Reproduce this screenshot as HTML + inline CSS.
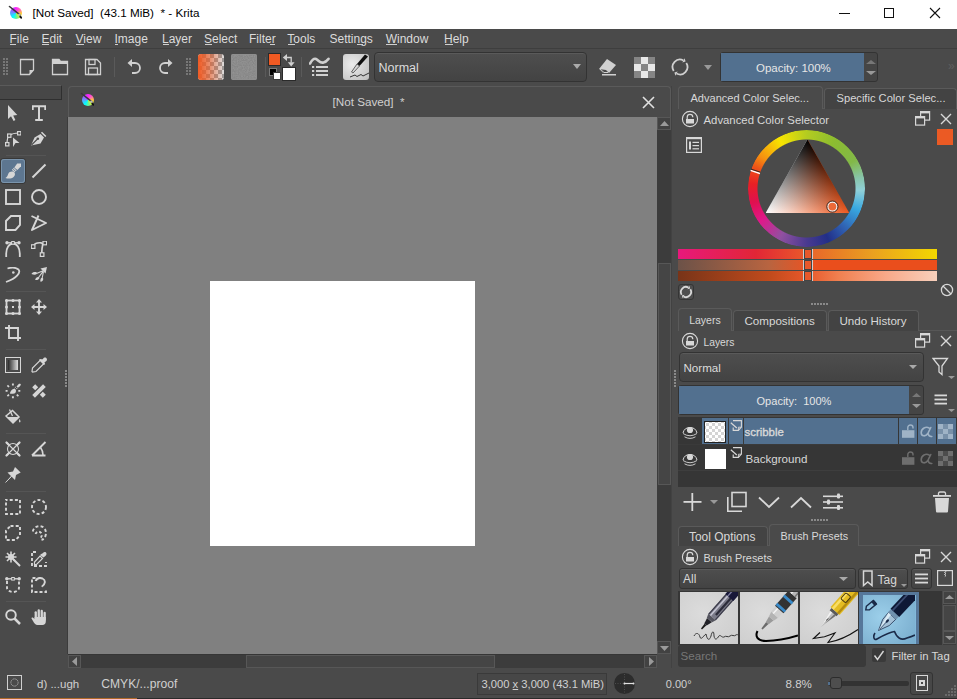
<!DOCTYPE html>
<html><head><meta charset="utf-8"><style>
html,body{margin:0;padding:0;}
body{width:957px;height:699px;overflow:hidden;position:relative;background:#4a4a4a;font-family:"Liberation Sans",sans-serif;}
body>div,body>span{position:absolute;}
.t{position:absolute;white-space:pre;line-height:1;}
</style></head><body>
<svg width="0" height="0" style="position:absolute"><defs>
<linearGradient id="cw" x1="0" y1="0" x2="1" y2="1"><stop offset="0" stop-color="#f0f"/><stop offset="0.5" stop-color="#8ae"/><stop offset="1" stop-color="#0ff"/></linearGradient>
</defs></svg>
<div style="left:0px;top:0px;width:957px;height:29px;background:#fff"></div><div style="left:9.600000000000001px;top:6.8px;width:12.6px;height:12.6px;border-radius:50%;background:conic-gradient(#ff20ff 0deg,#ff60c0 45deg,#ffc040 90deg,#f0f020 120deg,#80f080 165deg,#00ffff 215deg,#60a0ff 270deg,#b040ff 320deg,#ff20ff 360deg)"></div><svg style="position:absolute;left:6.600000000000001px;top:3.8px;" width="18.6" height="18.6" viewBox="0 0 18.6 18.6"><g transform="scale(1.0)"><path d="M2.5 2.5L13 11" stroke="#3a3a3a" stroke-width="1.6" stroke-linecap="round"/><path d="M11.5 10L13.5 11.5" stroke="#bbb" stroke-width="2"/><path d="M13 11.5C14 12 15.5 13 15 14.5C14 15 12.5 14 12.3 12.5Z" fill="#111"/></g></svg><span class="t" style="left:32.5px;top:7.00px;font-size:11.7px;color:#000;">[Not Saved]&nbsp; (43.1 MiB)&nbsp; * - Krita</span><div style="left:839px;top:13px;width:11px;height:1px;background:#111"></div><div style="left:884px;top:8px;width:10px;height:10px;border:1px solid #111;box-sizing:border-box"></div><svg style="position:absolute;left:929px;top:7px;" width="12" height="12" viewBox="0 0 12 12"><path d="M1 1L11 11M11 1L1 11" stroke="#111" stroke-width="1.1"/></svg><div style="left:0px;top:29px;width:957px;height:20px;background:#4a4a4a"></div><span class="t" style="left:9.5px;top:33.00px;font-size:12px;color:#dcdcdc;">File</span><span class="t" style="left:41.5px;top:33.00px;font-size:12px;color:#dcdcdc;">Edit</span><span class="t" style="left:75.5px;top:33.00px;font-size:12px;color:#dcdcdc;">View</span><span class="t" style="left:114.5px;top:33.00px;font-size:12px;color:#dcdcdc;">Image</span><span class="t" style="left:162.0px;top:33.00px;font-size:12px;color:#dcdcdc;">Layer</span><span class="t" style="left:204.0px;top:33.00px;font-size:12px;color:#dcdcdc;">Select</span><span class="t" style="left:249.0px;top:33.00px;font-size:12px;color:#dcdcdc;">Filter</span><span class="t" style="left:287.3px;top:33.00px;font-size:12px;color:#dcdcdc;">Tools</span><span class="t" style="left:329.5px;top:33.00px;font-size:12px;color:#dcdcdc;">Settings</span><span class="t" style="left:385.7px;top:33.00px;font-size:12px;color:#dcdcdc;">Window</span><span class="t" style="left:444.0px;top:33.00px;font-size:12px;color:#dcdcdc;">Help</span><div style="left:10px;top:44px;width:6px;height:1px;background:#cfcfcf"></div><div style="left:42px;top:44px;width:7px;height:1px;background:#cfcfcf"></div><div style="left:76px;top:44px;width:8px;height:1px;background:#cfcfcf"></div><div style="left:115px;top:44px;width:3px;height:1px;background:#cfcfcf"></div><div style="left:162.5px;top:44px;width:6px;height:1px;background:#cfcfcf"></div><div style="left:204.5px;top:44px;width:7px;height:1px;background:#cfcfcf"></div><div style="left:270px;top:44px;width:5px;height:1px;background:#cfcfcf"></div><div style="left:288px;top:44px;width:7px;height:1px;background:#cfcfcf"></div><div style="left:357px;top:44px;width:6px;height:1px;background:#cfcfcf"></div><div style="left:386.2px;top:44px;width:11px;height:1px;background:#cfcfcf"></div><div style="left:444.5px;top:44px;width:8px;height:1px;background:#cfcfcf"></div><div style="left:0px;top:48px;width:957px;height:1px;background:#3e3e3e"></div><div style="left:0px;top:49px;width:957px;height:36px;background:#4a4a4a"></div><svg style="position:absolute;left:3px;top:58px;" width="6" height="18" viewBox="0 0 6 18"><rect x="0" y="0" width="2" height="2" fill="#777"/><rect x="3" y="0" width="2" height="2" fill="#777"/><rect x="0" y="3" width="2" height="2" fill="#777"/><rect x="3" y="3" width="2" height="2" fill="#777"/><rect x="0" y="6" width="2" height="2" fill="#777"/><rect x="3" y="6" width="2" height="2" fill="#777"/><rect x="0" y="9" width="2" height="2" fill="#777"/><rect x="3" y="9" width="2" height="2" fill="#777"/><rect x="0" y="12" width="2" height="2" fill="#777"/><rect x="3" y="12" width="2" height="2" fill="#777"/><rect x="0" y="15" width="2" height="2" fill="#777"/><rect x="3" y="15" width="2" height="2" fill="#777"/></svg><svg style="position:absolute;left:186px;top:58px;" width="6" height="18" viewBox="0 0 6 18"><rect x="0" y="0" width="2" height="2" fill="#777"/><rect x="3" y="0" width="2" height="2" fill="#777"/><rect x="0" y="3" width="2" height="2" fill="#777"/><rect x="3" y="3" width="2" height="2" fill="#777"/><rect x="0" y="6" width="2" height="2" fill="#777"/><rect x="3" y="6" width="2" height="2" fill="#777"/><rect x="0" y="9" width="2" height="2" fill="#777"/><rect x="3" y="9" width="2" height="2" fill="#777"/><rect x="0" y="12" width="2" height="2" fill="#777"/><rect x="3" y="12" width="2" height="2" fill="#777"/><rect x="0" y="15" width="2" height="2" fill="#777"/><rect x="3" y="15" width="2" height="2" fill="#777"/></svg><svg style="position:absolute;left:19px;top:58px;" width="16" height="18" viewBox="0 0 16 18"><path d="M1.5 1.5H14.5V12L10.5 16.5H1.5Z" fill="none" stroke="#d0d0d0" stroke-width="1.3"/><path d="M14.5 12L10.5 12L10.5 16.5Z" fill="#d0d0d0"/></svg><svg style="position:absolute;left:51px;top:58px;" width="18" height="18" viewBox="0 0 18 18"><path d="M1.5 1.5H8L9.5 3.5H16.5V16.5H1.5Z" fill="none" stroke="#d0d0d0" stroke-width="1.3"/><path d="M1.5 1.5H8L9.5 3.5H16.5V6H1.5Z" fill="#d0d0d0"/></svg><svg style="position:absolute;left:84px;top:58px;" width="18" height="18" viewBox="0 0 18 18"><path d="M1.5 1.5H13L16.5 5V16.5H1.5Z" fill="none" stroke="#d0d0d0" stroke-width="1.3"/><rect x="5" y="1.5" width="6" height="5" fill="none" stroke="#d0d0d0" stroke-width="1.3"/><rect x="4.5" y="10" width="9" height="6.5" fill="none" stroke="#d0d0d0" stroke-width="1.3"/></svg><div style="left:114px;top:57px;width:1px;height:20px;background:#5a5a5a"></div><svg style="position:absolute;left:125px;top:57px;" width="18" height="20" viewBox="0 0 18 20"><path d="M6 6H10A5 5 0 0 1 10 16H7" fill="none" stroke="#d0d0d0" stroke-width="1.8"/><path d="M2.5 6L7 2V10Z" fill="#d0d0d0"/></svg><svg style="position:absolute;left:157px;top:57px;" width="18" height="20" viewBox="0 0 18 20"><path d="M12 6H8A5 5 0 0 0 8 16H11" fill="none" stroke="#d0d0d0" stroke-width="1.8"/><path d="M15.5 6L11 2V10Z" fill="#d0d0d0"/></svg><div style="left:198px;top:54px;width:26px;height:26px;border-radius:3px;overflow:hidden;background-color:#ddd;background-image:linear-gradient(45deg,#999 25%,transparent 25%,transparent 75%,#999 75%),linear-gradient(45deg,#999 25%,transparent 25%,transparent 75%,#999 75%);background-size:8px 8px;background-position:0 0,4px 4px"><div style="position:absolute;left:0;top:0;width:26px;height:26px;background:linear-gradient(90deg,#f05a23 0%,rgba(240,90,35,0.55) 50%,rgba(240,90,35,0) 100%)"></div></div><svg style="position:absolute;left:231px;top:54px;" width="26" height="26" viewBox="0 0 26 26"><defs><filter id="nz" x="0" y="0" width="100%" height="100%"><feTurbulence type="fractalNoise" baseFrequency="1.2" numOctaves="1" seed="3"/><feColorMatrix type="matrix" values="0 0 0 0 0.53 0 0 0 0 0.53 0 0 0 0 0.53 1 0 0 0 -0.3"/></filter></defs><rect width="26" height="26" rx="2" fill="#868686"/><rect width="26" height="26" rx="2" fill="#000" filter="url(#nz)" opacity="0.5"/><rect x="0.5" y="0.5" width="25" height="25" rx="2" fill="none" stroke="#8e8e8e" stroke-width="1"/></svg><div style="left:265px;top:57px;width:1px;height:20px;background:#5a5a5a"></div><div style="left:268px;top:53px;width:13px;height:13px;background:#f05a23;border:1px solid #2a2a2a;box-sizing:border-box"></div><div style="left:282px;top:67px;width:14px;height:14px;background:#fff;border:1px solid #2a2a2a;box-sizing:border-box"></div><div style="left:269px;top:68px;width:8px;height:8px;background:#000;border:1px solid #7a7a7a;box-sizing:border-box"></div><div style="left:273px;top:72px;width:8px;height:8px;background:#fff;border:1px solid #3a3a3a;box-sizing:border-box"></div><svg style="position:absolute;left:282px;top:53px;" width="15" height="15" viewBox="0 0 15 15"><path d="M4 4.5H9.2V9.5" fill="none" stroke="#d0d0d0" stroke-width="1.3"/><path d="M0.8 4.5L5 1V8Z M9.2 13.5L5.8 9.3H12.6Z" fill="#d0d0d0"/></svg><div style="left:301px;top:57px;width:1px;height:20px;background:#5a5a5a"></div><svg style="position:absolute;left:309px;top:55px;" width="22" height="23" viewBox="0 0 22 23"><path d="M1 8.5C3 5 4.5 3 7 4C9.5 5 11 8.5 14.5 7.5C17 7 18.5 5 19.5 3.8" fill="none" stroke="#d0d0d0" stroke-width="2.6" stroke-linecap="round"/><rect x="3" y="11" width="2.2" height="2" fill="#d0d0d0"/><rect x="7" y="11" width="12" height="2" fill="#d0d0d0"/><rect x="3" y="15" width="2.2" height="2" fill="#d0d0d0"/><rect x="7" y="15" width="12" height="2" fill="#d0d0d0"/><rect x="3" y="19" width="2.2" height="2" fill="#d0d0d0"/><rect x="7" y="19" width="12" height="2" fill="#d0d0d0"/></svg><div style="left:343px;top:54px;width:26px;height:26px;border-radius:3px;background:radial-gradient(circle at 35% 40%,#ececec,#bdbdbd)"></div><svg style="position:absolute;left:343px;top:54px;" width="26" height="26" viewBox="0 0 26 26"><path d="M25 2.5L22 0.5L14 10L16.5 12Z" fill="#111"/><path d="M14 10L16.5 12L10 19L8.5 18Z" fill="#d8d8d8" stroke="#444" stroke-width="0.8"/><path d="M7 23L12 21L14 22.5L18 20.5L20 22L26 19" fill="none" stroke="#333" stroke-width="1"/></svg><div style="left:374px;top:52px;width:213px;height:30px;border:1px solid #333;border-radius:4px;box-sizing:border-box;background:linear-gradient(#4e4e4e,#434343);box-shadow:inset 0 1px 0 #5a5a5a"></div><span class="t" style="left:378.5px;top:62.00px;font-size:12.5px;color:#dcdcdc;">Normal</span><svg style="position:absolute;left:573px;top:64px;" width="8" height="5" viewBox="0 0 8 5"><path d="M0 0H8L4 5Z" fill="#aaa"/></svg><svg style="position:absolute;left:597px;top:57px;" width="21" height="20" viewBox="0 0 21 20"><path d="M10 2L19 8L12 16H6L2 12Z" fill="#d0d0d0"/><path d="M2 12L6 16H12L9 13" fill="#4a4a4a"/><path d="M3 12L7 15.5H11" fill="none" stroke="#d0d0d0" stroke-width="1"/><rect x="5" y="17" width="14" height="1.5" fill="#d0d0d0"/></svg><svg style="position:absolute;left:634px;top:57px;" width="21" height="21" viewBox="0 0 21 21"><rect x="0" y="0" width="7" height="7" fill="#858585"/><rect x="7" y="0" width="7" height="7" fill="#e8e8e8"/><rect x="14" y="0" width="7" height="7" fill="#858585"/><rect x="0" y="7" width="7" height="7" fill="#e8e8e8"/><rect x="7" y="7" width="7" height="7" fill="#858585"/><rect x="14" y="7" width="7" height="7" fill="#e8e8e8"/><rect x="0" y="14" width="7" height="7" fill="#858585"/><rect x="7" y="14" width="7" height="7" fill="#e8e8e8"/><rect x="14" y="14" width="7" height="7" fill="#858585"/></svg><svg style="position:absolute;left:670px;top:57px;" width="20" height="20" viewBox="0 0 20 20"><path d="M13.47 3.47A7.4 7.4 0 0 0 3.72 13.92" fill="none" stroke="#d0d0d0" stroke-width="1.8"/><path d="M15.59 4.59L14.60 1.35L12.35 5.59Z" fill="#d0d0d0"/><path d="M6.53 16.53A7.4 7.4 0 0 0 16.28 6.08" fill="none" stroke="#d0d0d0" stroke-width="1.8"/><path d="M4.41 15.41L5.40 18.65L7.65 14.41Z" fill="#d0d0d0"/></svg><svg style="position:absolute;left:704px;top:65px;" width="8" height="5" viewBox="0 0 8 5"><path d="M0 0H8L4 5Z" fill="#999"/></svg><div style="left:720px;top:52px;width:158px;height:30px;border:1px solid #333;border-radius:3px;box-sizing:border-box;background:#454545"></div><div style="left:721px;top:53px;width:143px;height:28px;background:#52708f"></div><span class="t" style="left:756px;top:63.00px;font-size:11.5px;color:#e6e6e6;">Opacity: 100%</span><svg style="position:absolute;left:866px;top:60px;" width="10" height="4" viewBox="0 0 10 4"><path d="M0 4H10L5 0Z" fill="#777"/></svg><svg style="position:absolute;left:866px;top:71px;" width="10" height="4" viewBox="0 0 10 4"><path d="M0 0H10L5 4Z" fill="#999"/></svg><span class="t" style="left:948px;top:60.00px;font-size:12px;color:#5e5e5e;">&raquo;</span><div style="left:0px;top:85px;width:62px;height:15px;border:1px solid #2f2f2f;border-top-color:#5a5a5a;border-left:none;box-sizing:border-box;background:#474747"></div><div style="left:62px;top:86px;width:5px;height:582px;background:#4a4a4a"></div><div style="left:65px;top:370px;width:2px;height:2px;background:#8a8a8a"></div><div style="left:65px;top:373px;width:2px;height:2px;background:#8a8a8a"></div><div style="left:65px;top:376px;width:2px;height:2px;background:#8a8a8a"></div><div style="left:65px;top:379px;width:2px;height:2px;background:#8a8a8a"></div><div style="left:65px;top:382px;width:2px;height:2px;background:#8a8a8a"></div><div style="left:65px;top:385px;width:2px;height:2px;background:#8a8a8a"></div><div style="left:67px;top:117px;width:1px;height:537px;background:#3c3c3c"></div><div style="left:68px;top:86px;width:603px;height:31px;background:#4a4a4a;border:1px solid #5a5a5a;border-bottom:none;border-radius:4px 4px 0 0;box-sizing:border-box"></div><div style="left:81.7px;top:93.7px;width:12.6px;height:12.6px;border-radius:50%;background:conic-gradient(#ff20ff 0deg,#ff60c0 45deg,#ffc040 90deg,#f0f020 120deg,#80f080 165deg,#00ffff 215deg,#60a0ff 270deg,#b040ff 320deg,#ff20ff 360deg)"></div><svg style="position:absolute;left:78.7px;top:90.7px;" width="18.6" height="18.6" viewBox="0 0 18.6 18.6"><g transform="scale(1.0)"><path d="M2.5 2.5L13 11" stroke="#3a3a3a" stroke-width="1.6" stroke-linecap="round"/><path d="M11.5 10L13.5 11.5" stroke="#bbb" stroke-width="2"/><path d="M13 11.5C14 12 15.5 13 15 14.5C14 15 12.5 14 12.3 12.5Z" fill="#111"/></g></svg><span class="t" style="left:332.5px;top:96.00px;font-size:11.7px;color:#cfcfcf;">[Not Saved]&nbsp; *</span><svg style="position:absolute;left:642px;top:96px;" width="13" height="13" viewBox="0 0 13 13"><path d="M1 1L12 12M12 1L1 12" stroke="#e0e0e0" stroke-width="1.6"/></svg><div style="left:68px;top:117px;width:589px;height:537px;background:#808080"></div><div style="left:210px;top:281px;width:265px;height:265px;background:#fff"></div><div style="left:657px;top:117px;width:14px;height:537px;background:#3c3c3c"></div><div style="left:657px;top:117px;width:14px;height:13px;border:1px solid #575757;box-sizing:border-box;background:#424242"></div><svg style="position:absolute;left:660px;top:121px;" width="9" height="5" viewBox="0 0 9 5"><path d="M0 5H9L4.5 0Z" fill="#9a9a9a"/></svg><div style="left:658px;top:263px;width:13px;height:222px;border:1px solid #575757;box-sizing:border-box;background:#454545"></div><div style="left:657px;top:641px;width:14px;height:13px;border:1px solid #575757;box-sizing:border-box;background:#424242"></div><svg style="position:absolute;left:660px;top:646px;" width="9" height="5" viewBox="0 0 9 5"><path d="M0 0H9L4.5 5Z" fill="#9a9a9a"/></svg><div style="left:68px;top:654px;width:589px;height:14px;background:#3c3c3c"></div><div style="left:68px;top:654px;width:589px;height:1px;background:#363636"></div><div style="left:68px;top:655px;width:13px;height:13px;border:1px solid #575757;box-sizing:border-box;background:#424242"></div><svg style="position:absolute;left:72px;top:657px;" width="5" height="9" viewBox="0 0 5 9"><path d="M5 0V9L0 4.5Z" fill="#9a9a9a"/></svg><div style="left:246px;top:655px;width:249px;height:13px;border:1px solid #575757;box-sizing:border-box;background:#454545"></div><div style="left:644px;top:655px;width:13px;height:13px;border:1px solid #575757;box-sizing:border-box;background:#424242"></div><svg style="position:absolute;left:649px;top:657px;" width="5" height="9" viewBox="0 0 5 9"><path d="M0 0V9L5 4.5Z" fill="#9a9a9a"/></svg><div style="left:657px;top:654px;width:14px;height:14px;background:#4a4a4a"></div><div style="left:671px;top:86px;width:286px;height:582px;background:#4a4a4a"></div><div style="left:671px;top:86px;width:1px;height:582px;background:#424242"></div><div style="left:822px;top:108px;width:135px;height:1px;background:#575757"></div><div style="left:678px;top:86px;width:145px;height:23px;background:#4a4a4a;border:1px solid #5a5a5a;border-bottom:none;border-radius:4px 4px 0 0;box-sizing:border-box"></div><span class="t" style="left:690.5px;top:93.00px;font-size:11.05px;color:#d8d8d8;">Advanced Color Selec...</span><div style="left:824px;top:88px;width:133px;height:21px;background:#434343;border:1px solid #5a5a5a;border-bottom:none;border-radius:4px 4px 0 0;box-sizing:border-box"></div><span class="t" style="left:836.5px;top:93.00px;font-size:11.15px;color:#d8d8d8;">Specific Color Selec...</span><svg style="position:absolute;left:680.7px;top:110px;" width="18" height="18" viewBox="0 0 18 18"><circle cx="9" cy="9" r="7.6" fill="none" stroke="#d8d8d8" stroke-width="1.1"/><rect x="5" y="9" width="8" height="4.5" fill="#d8d8d8"/><path d="M6.2 9V7.2A2.8 2.8 0 0 1 11.8 7.2" fill="none" stroke="#d8d8d8" stroke-width="1.2"/></svg><span class="t" style="left:703.5px;top:115.00px;font-size:11.35px;color:#d8d8d8;">Advanced Color Selector</span><svg style="position:absolute;left:915px;top:111px;" width="16" height="16" viewBox="0 0 16 16"><rect x="5.6" y="0.6" width="9" height="8.5" fill="none" stroke="#d8d8d8" stroke-width="1.2"/><rect x="5.6" y="0.6" width="9" height="1.8" fill="#d8d8d8"/><rect x="0.6" y="5.6" width="9" height="8.5" fill="#4a4a4a" stroke="#d8d8d8" stroke-width="1.2"/><rect x="0.6" y="5.6" width="9" height="1.8" fill="#d8d8d8"/></svg><svg style="position:absolute;left:940px;top:113px;" width="12" height="12" viewBox="0 0 12 12"><path d="M1 1L11 11M11 1L1 11" stroke="#d8d8d8" stroke-width="1.4"/></svg><div style="left:937px;top:129px;width:16px;height:16px;background:#eb5a24"></div><svg style="position:absolute;left:685px;top:136px;" width="18" height="18" viewBox="0 0 18 18"><rect x="1.6" y="1.6" width="14.8" height="14.8" fill="none" stroke="#d8d8d8" stroke-width="1.2"/><rect x="1" y="1" width="16" height="2.2" fill="#d8d8d8"/><rect x="4" y="5.5" width="2" height="8" fill="#d8d8d8"/><rect x="7.5" y="5.8" width="6.5" height="1.2" fill="#d8d8d8"/><rect x="7.5" y="9" width="6.5" height="1.2" fill="#d8d8d8"/><rect x="7.5" y="12.2" width="6.5" height="1.2" fill="#d8d8d8"/></svg><div style="left:748px;top:130px;width:117px;height:117px;border-radius:50%;background:conic-gradient(from 0deg,#b4cc20 0deg,#8cbc30 30deg,#82b848 60deg,#88c4a8 78deg,#90d0d8 92deg,#38a8e0 112deg,#3064b4 135deg,#222f88 157deg,#4a3a90 180deg,#9050a0 208deg,#e0188a 235deg,#e01050 255deg,#e82024 275deg,#ee5018 292deg,#f59010 305deg,#f8e400 331deg,#b4cc20 360deg);-webkit-mask:radial-gradient(circle at center,transparent 48.5px,#000 49.5px);mask:radial-gradient(circle at center,transparent 48.5px,#000 49.5px)"></div><div style="left:765.6px;top:139.6px;width:83.7px;height:73.4px;clip-path:polygon(50% 0,100% 100%,0 100%);background:conic-gradient(from 0deg at 50% 0,#f05a20 0deg,#f05a20 150deg,#f3845a 165deg,#f8ad90 180deg,#fcd6c8 195deg,#fff 210deg,#fff 360deg)"><div style="position:absolute;left:0;top:0;width:100%;height:100%;background:linear-gradient(180deg,#000 0%,rgba(0,0,0,0) 100%)"></div></div><svg style="position:absolute;left:748px;top:130px;" width="117" height="117" viewBox="0 0 117 117">
<circle cx="84.4" cy="76.6" r="4.6" fill="#ec6a38" stroke="#f4f4f4" stroke-width="1.3"/>
<circle cx="84.4" cy="76.6" r="5.6" fill="none" stroke="#1a1a1a" stroke-width="0.8"/>
<path d="M2.6 40.4L12 43.5" stroke="#fff" stroke-width="1.4"/>
<path d="M3 39.1L12.4 42.2" stroke="#222" stroke-width="0.9"/>
</svg><div style="left:678px;top:249px;width:259px;height:10px;background:linear-gradient(90deg,#e8187c 0%,#e22636 30%,#e8582a 49%,#e8682a 52%,#eaa020 75%,#f2d800 100%)"></div><div style="left:678px;top:260px;width:259px;height:10px;background:linear-gradient(90deg,#6c5248 0%,#b86440 35%,#e85424 50%,#ea4e1c 55%,#ea4e1c 100%)"></div><div style="left:678px;top:271px;width:259px;height:10px;background:linear-gradient(90deg,#783418 0%,#c04a1c 35%,#e8582a 50%,#f08050 62%,#f8a888 80%,#f8d0bc 100%)"></div><div style="left:803px;top:249px;width:1px;height:10px;background:#cfcfcf"></div><div style="left:812px;top:249px;width:1px;height:10px;background:#cfcfcf"></div><div style="left:804px;top:249px;width:8px;height:10px;background:#444"></div><div style="left:805px;top:250px;width:6px;height:8px;background:#e8582a"></div><div style="left:803px;top:260px;width:1px;height:10px;background:#cfcfcf"></div><div style="left:812px;top:260px;width:1px;height:10px;background:#cfcfcf"></div><div style="left:804px;top:260px;width:8px;height:10px;background:#444"></div><div style="left:805px;top:261px;width:6px;height:8px;background:#e8582a"></div><div style="left:803px;top:271px;width:1px;height:10px;background:#cfcfcf"></div><div style="left:812px;top:271px;width:1px;height:10px;background:#cfcfcf"></div><div style="left:804px;top:271px;width:8px;height:10px;background:#444"></div><div style="left:805px;top:272px;width:6px;height:8px;background:#e8582a"></div><div style="left:678px;top:284px;width:16px;height:16px;border:1px solid #353535;border-radius:3px;box-sizing:border-box;background:#4e4e4e"></div><svg style="position:absolute;left:679px;top:285px;" width="14" height="14" viewBox="0 0 14 14"><path d="M9.39 2.50A5.1 5.1 0 0 0 2.67 9.70" fill="none" stroke="#d8d8d8" stroke-width="1.8"/><path d="M11.16 3.44L10.33 0.73L8.46 4.26Z" fill="#d8d8d8"/><path d="M4.61 11.50A5.1 5.1 0 0 0 11.33 4.30" fill="none" stroke="#d8d8d8" stroke-width="1.8"/><path d="M2.84 10.56L3.67 13.27L5.54 9.74Z" fill="#d8d8d8"/></svg><svg style="position:absolute;left:940px;top:283px;" width="14" height="14" viewBox="0 0 14 14"><circle cx="7" cy="7" r="5.6" fill="none" stroke="#d8d8d8" stroke-width="1.3"/><path d="M3 3L11 11" stroke="#d8d8d8" stroke-width="1.3"/></svg><div style="left:811px;top:303px;width:2px;height:2px;background:#8a8a8a"></div><div style="left:814px;top:303px;width:2px;height:2px;background:#8a8a8a"></div><div style="left:817px;top:303px;width:2px;height:2px;background:#8a8a8a"></div><div style="left:820px;top:303px;width:2px;height:2px;background:#8a8a8a"></div><div style="left:823px;top:303px;width:2px;height:2px;background:#8a8a8a"></div><div style="left:826px;top:303px;width:2px;height:2px;background:#8a8a8a"></div><div style="left:731px;top:330px;width:226px;height:1px;background:#575757"></div><div style="left:678px;top:308px;width:54px;height:23px;background:#4a4a4a;border:1px solid #5a5a5a;border-bottom:none;border-radius:4px 4px 0 0;box-sizing:border-box"></div><span class="t" style="left:689.2px;top:315.00px;font-size:10.5px;color:#d8d8d8;">Layers</span><div style="left:733px;top:310px;width:94px;height:21px;background:#434343;border:1px solid #5a5a5a;border-bottom:none;border-radius:4px 4px 0 0;box-sizing:border-box"></div><span class="t" style="left:744.5px;top:315.00px;font-size:11.6px;color:#d8d8d8;">Compositions</span><div style="left:828px;top:310px;width:91px;height:21px;background:#434343;border:1px solid #5a5a5a;border-bottom:none;border-radius:4px 4px 0 0;box-sizing:border-box"></div><span class="t" style="left:839.5px;top:315.00px;font-size:11.6px;color:#d8d8d8;">Undo History</span><svg style="position:absolute;left:680.7px;top:332px;" width="18" height="18" viewBox="0 0 18 18"><circle cx="9" cy="9" r="7.6" fill="none" stroke="#d8d8d8" stroke-width="1.1"/><rect x="5" y="9" width="8" height="4.5" fill="#d8d8d8"/><path d="M6.2 9V7.2A2.8 2.8 0 0 1 11.8 7.2" fill="none" stroke="#d8d8d8" stroke-width="1.2"/></svg><span class="t" style="left:703.5px;top:338.00px;font-size:10.3px;color:#d8d8d8;">Layers</span><svg style="position:absolute;left:915px;top:333px;" width="16" height="16" viewBox="0 0 16 16"><rect x="5.6" y="0.6" width="9" height="8.5" fill="none" stroke="#d8d8d8" stroke-width="1.2"/><rect x="5.6" y="0.6" width="9" height="1.8" fill="#d8d8d8"/><rect x="0.6" y="5.6" width="9" height="8.5" fill="#4a4a4a" stroke="#d8d8d8" stroke-width="1.2"/><rect x="0.6" y="5.6" width="9" height="1.8" fill="#d8d8d8"/></svg><svg style="position:absolute;left:940px;top:335px;" width="12" height="12" viewBox="0 0 12 12"><path d="M1 1L11 11M11 1L1 11" stroke="#d8d8d8" stroke-width="1.4"/></svg><div style="left:679px;top:352px;width:245px;height:30px;border:1px solid #333;border-radius:4px;box-sizing:border-box;background:linear-gradient(#4e4e4e,#434343);box-shadow:inset 0 1px 0 #5a5a5a"></div><span class="t" style="left:683.5px;top:362.00px;font-size:11.6px;color:#dcdcdc;">Normal</span><svg style="position:absolute;left:909px;top:365px;" width="8" height="4" viewBox="0 0 8 4"><path d="M0 0H8L4.0 4Z" fill="#aaa"/></svg><svg style="position:absolute;left:932px;top:357px;" width="17" height="19" viewBox="0 0 17 19"><path d="M1 1.5H15.5L10 9V17.5L7 15V9Z" fill="none" stroke="#d8d8d8" stroke-width="1.3"/></svg><svg style="position:absolute;left:948px;top:376px;" width="7" height="3" viewBox="0 0 7 3"><path d="M0 0H7L3.5 3Z" fill="#999"/></svg><div style="left:678px;top:385px;width:246px;height:30px;border:1px solid #333;border-radius:3px;box-sizing:border-box;background:#454545"></div><div style="left:679px;top:386px;width:230px;height:28px;background:#52708f"></div><span class="t" style="left:756.5px;top:396.00px;font-size:11.05px;color:#e6e6e6;">Opacity:&nbsp; 100%</span><svg style="position:absolute;left:912px;top:393px;" width="9" height="4" viewBox="0 0 9 4"><path d="M0 4H9L4.5 0Z" fill="#777"/></svg><svg style="position:absolute;left:912px;top:404px;" width="9" height="4" viewBox="0 0 9 4"><path d="M0 0H9L4.5 4Z" fill="#999"/></svg><svg style="position:absolute;left:934px;top:394px;" width="14" height="12" viewBox="0 0 14 12"><rect x="0.5" y="0.5" width="12.5" height="1.8" fill="#d8d8d8"/><rect x="0.5" y="4.6" width="12.5" height="1.8" fill="#d8d8d8"/><rect x="0.5" y="8.7" width="12.5" height="1.8" fill="#d8d8d8"/></svg><svg style="position:absolute;left:948px;top:409px;" width="7" height="3" viewBox="0 0 7 3"><path d="M0 0H7L3.5 3Z" fill="#999"/></svg><div style="left:678px;top:417px;width:279px;height:70px;background:#363636"></div><div style="left:702px;top:418px;width:196px;height:26px;background:#52708f"></div><div style="left:899px;top:418px;width:18px;height:26px;background:#52708f"></div><div style="left:918px;top:418px;width:18px;height:26px;background:#52708f"></div><div style="left:937px;top:418px;width:19px;height:26px;background:#52708f"></div><div style="left:728px;top:418px;width:1px;height:26px;background:#3a3a3a"></div><div style="left:743px;top:418px;width:1px;height:26px;background:#3a3a3a"></div><div style="left:704px;top:421px;width:22px;height:22px;box-sizing:border-box;border:1px solid #222;background:repeating-conic-gradient(#fff 0 25%,#d4d4d4 0 50%) 1px 1px/6px 6px"></div><div style="left:705px;top:449px;width:21px;height:20px;background:#fff"></div><div style="left:678px;top:470px;width:279px;height:1px;background:#3e3e3e"></div><div style="left:678px;top:444px;width:279px;height:1px;background:#3a3a3a"></div><svg style="position:absolute;left:681px;top:422px;" width="18" height="18" viewBox="0 0 18 18"><path d="M2 11A7.2 7.2 0 0 1 16 11" fill="none" stroke="#d8d8d8" stroke-width="1"/><circle cx="9" cy="8" r="3.1" fill="#d8d8d8"/><path d="M2 11.5Q9 16 16 11.5" fill="none" stroke="#d8d8d8" stroke-width="0.9"/><path d="M3.5 14.8Q9 18 14.5 14.8" fill="none" stroke="#d8d8d8" stroke-width="0.9"/></svg><svg style="position:absolute;left:681px;top:449px;" width="18" height="18" viewBox="0 0 18 18"><path d="M2 11A7.2 7.2 0 0 1 16 11" fill="none" stroke="#d8d8d8" stroke-width="1"/><circle cx="9" cy="8" r="3.1" fill="#d8d8d8"/><path d="M2 11.5Q9 16 16 11.5" fill="none" stroke="#d8d8d8" stroke-width="0.9"/><path d="M3.5 14.8Q9 18 14.5 14.8" fill="none" stroke="#d8d8d8" stroke-width="0.9"/></svg><svg style="position:absolute;left:730px;top:420px;" width="13" height="12" viewBox="0 0 13 12"><path d="M3 0.6H11.4V7L8.4 10.4H3.2V7.5" fill="none" stroke="#d8d8d8" stroke-width="1.1"/><path d="M8.4 10.4V7.2H11.4" fill="none" stroke="#d8d8d8" stroke-width="0.9"/><path d="M0.8 2.8L6.8 8" stroke="#d8d8d8" stroke-width="1.2"/></svg><svg style="position:absolute;left:730px;top:447px;" width="13" height="12" viewBox="0 0 13 12"><path d="M3 0.6H11.4V7L8.4 10.4H3.2V7.5" fill="none" stroke="#d8d8d8" stroke-width="1.1"/><path d="M8.4 10.4V7.2H11.4" fill="none" stroke="#d8d8d8" stroke-width="0.9"/><path d="M0.8 2.8L6.8 8" stroke="#d8d8d8" stroke-width="1.2"/></svg><span class="t" style="left:744.5px;top:427.00px;font-size:11.4px;color:#d8d8d8;-webkit-text-stroke:0.35px #d8d8d8">scribble</span><span class="t" style="left:745.5px;top:453.00px;font-size:11.6px;color:#d8d8d8;">Background</span><svg style="position:absolute;left:901px;top:424px;" width="14" height="14" viewBox="0 0 14 14"><rect x="1" y="6.2" width="12.4" height="7.6" fill="#9fb3c6"/><path d="M6.5 6V3.6A2.6 2.6 0 0 1 11.7 3.6V4.6" fill="none" stroke="#9fb3c6" stroke-width="1.4" transform="translate(0.3 0)"/></svg><svg style="position:absolute;left:919px;top:424px;" width="16" height="15" viewBox="0 0 16 15"><path d="M10.3 4.2C7 1.8 2.2 4.5 2.2 8.8C2.2 12.5 6.5 13 9 9.2L11.8 3.5M9 9.2C9.3 11.5 10.3 12.8 12.8 12.5" fill="none" stroke="#9fb3c6" stroke-width="1.6" stroke-linecap="round"/></svg><svg style="position:absolute;left:938px;top:424px;" width="15" height="15" viewBox="0 0 15 15"><rect x="0" y="0" width="5" height="5" fill="#9fb3c6"/><rect x="5" y="0" width="5" height="5" fill="#7890a8"/><rect x="10" y="0" width="5" height="5" fill="#9fb3c6"/><rect x="0" y="5" width="5" height="5" fill="#7890a8"/><rect x="5" y="5" width="5" height="5" fill="#9fb3c6"/><rect x="10" y="5" width="5" height="5" fill="#7890a8"/><rect x="0" y="10" width="5" height="5" fill="#9fb3c6"/><rect x="5" y="10" width="5" height="5" fill="#7890a8"/><rect x="10" y="10" width="5" height="5" fill="#9fb3c6"/></svg><svg style="position:absolute;left:901px;top:451px;" width="14" height="14" viewBox="0 0 14 14"><rect x="1" y="6.2" width="12.4" height="7.6" fill="#6e6e6e"/><path d="M6.5 6V3.6A2.6 2.6 0 0 1 11.7 3.6V4.6" fill="none" stroke="#6e6e6e" stroke-width="1.4" transform="translate(0.3 0)"/></svg><svg style="position:absolute;left:919px;top:451px;" width="16" height="15" viewBox="0 0 16 15"><path d="M10.3 4.2C7 1.8 2.2 4.5 2.2 8.8C2.2 12.5 6.5 13 9 9.2L11.8 3.5M9 9.2C9.3 11.5 10.3 12.8 12.8 12.5" fill="none" stroke="#6e6e6e" stroke-width="1.6" stroke-linecap="round"/></svg><svg style="position:absolute;left:938px;top:451px;" width="15" height="15" viewBox="0 0 15 15"><rect x="0" y="0" width="5" height="5" fill="#6e6e6e"/><rect x="5" y="0" width="5" height="5" fill="#4c4c4c"/><rect x="10" y="0" width="5" height="5" fill="#6e6e6e"/><rect x="0" y="5" width="5" height="5" fill="#4c4c4c"/><rect x="5" y="5" width="5" height="5" fill="#6e6e6e"/><rect x="10" y="5" width="5" height="5" fill="#4c4c4c"/><rect x="0" y="10" width="5" height="5" fill="#6e6e6e"/><rect x="5" y="10" width="5" height="5" fill="#4c4c4c"/><rect x="10" y="10" width="5" height="5" fill="#6e6e6e"/></svg><svg style="position:absolute;left:683px;top:492px;" width="20" height="20" viewBox="0 0 20 20"><rect x="8.4" y="1" width="1.8" height="18" fill="#d8d8d8"/><rect x="0.5" y="9" width="18" height="1.8" fill="#d8d8d8"/></svg><svg style="position:absolute;left:710px;top:500px;" width="8" height="4" viewBox="0 0 8 4"><path d="M0 0H8L4.0 4Z" fill="#999"/></svg><svg style="position:absolute;left:726px;top:491px;" width="22" height="22" viewBox="0 0 22 22"><rect x="6" y="1.5" width="14" height="14" fill="none" stroke="#d8d8d8" stroke-width="1.6"/><path d="M1.8 6V20.2H16" fill="none" stroke="#d8d8d8" stroke-width="1.6"/></svg><svg style="position:absolute;left:758px;top:496px;" width="22" height="13" viewBox="0 0 22 13"><path d="M1 1.5L11 11L21 1.5" fill="none" stroke="#d8d8d8" stroke-width="1.8"/></svg><svg style="position:absolute;left:790px;top:496px;" width="22" height="13" viewBox="0 0 22 13"><path d="M1 11.5L11 2L21 11.5" fill="none" stroke="#d8d8d8" stroke-width="1.8"/></svg><svg style="position:absolute;left:822px;top:493px;" width="22" height="18" viewBox="0 0 22 18"><rect x="1" y="2.5" width="20" height="1.6" fill="#d8d8d8"/><rect x="1" y="8.2" width="20" height="1.6" fill="#d8d8d8"/><rect x="1" y="14" width="20" height="1.6" fill="#d8d8d8"/><rect x="15" y="0.5" width="3" height="5" rx="1" fill="#d8d8d8"/><rect x="5" y="6.5" width="3" height="5" rx="1" fill="#d8d8d8"/><rect x="15" y="12" width="3" height="5" rx="1" fill="#d8d8d8"/></svg><svg style="position:absolute;left:932px;top:491px;" width="20" height="22" viewBox="0 0 20 22"><rect x="1" y="4" width="18" height="1.8" fill="#d8d8d8"/><path d="M6.5 4V2.2A1.5 1.5 0 0 1 8 1H12A1.5 1.5 0 0 1 13.5 2.2V4" fill="none" stroke="#d8d8d8" stroke-width="1.3"/><path d="M3 7H17L16 20.5A1 1 0 0 1 15 21.5H5A1 1 0 0 1 4 20.5Z" fill="#d8d8d8"/></svg><div style="left:811px;top:519px;width:2px;height:2px;background:#8a8a8a"></div><div style="left:814px;top:519px;width:2px;height:2px;background:#8a8a8a"></div><div style="left:817px;top:519px;width:2px;height:2px;background:#8a8a8a"></div><div style="left:820px;top:519px;width:2px;height:2px;background:#8a8a8a"></div><div style="left:823px;top:519px;width:2px;height:2px;background:#8a8a8a"></div><div style="left:826px;top:519px;width:2px;height:2px;background:#8a8a8a"></div><div style="left:766px;top:545px;width:191px;height:1px;background:#575757"></div><div style="left:678px;top:526px;width:90px;height:20px;background:#434343;border:1px solid #5a5a5a;border-bottom:none;border-radius:4px 4px 0 0;box-sizing:border-box"></div><span class="t" style="left:689px;top:532.00px;font-size:11.95px;color:#d8d8d8;">Tool Options</span><div style="left:769px;top:524px;width:90px;height:22px;background:#4a4a4a;border:1px solid #5a5a5a;border-bottom:none;border-radius:4px 4px 0 0;box-sizing:border-box"></div><span class="t" style="left:780.5px;top:531.00px;font-size:10.75px;color:#d8d8d8;">Brush Presets</span><svg style="position:absolute;left:680.7px;top:548px;" width="18" height="18" viewBox="0 0 18 18"><circle cx="9" cy="9" r="7.6" fill="none" stroke="#d8d8d8" stroke-width="1.1"/><rect x="5" y="9" width="8" height="4.5" fill="#d8d8d8"/><path d="M6.2 9V7.2A2.8 2.8 0 0 1 11.8 7.2" fill="none" stroke="#d8d8d8" stroke-width="1.2"/></svg><span class="t" style="left:703.5px;top:553.00px;font-size:10.9px;color:#d8d8d8;">Brush Presets</span><svg style="position:absolute;left:915px;top:549px;" width="16" height="16" viewBox="0 0 16 16"><rect x="5.6" y="0.6" width="9" height="8.5" fill="none" stroke="#d8d8d8" stroke-width="1.2"/><rect x="5.6" y="0.6" width="9" height="1.8" fill="#d8d8d8"/><rect x="0.6" y="5.6" width="9" height="8.5" fill="#4a4a4a" stroke="#d8d8d8" stroke-width="1.2"/><rect x="0.6" y="5.6" width="9" height="1.8" fill="#d8d8d8"/></svg><svg style="position:absolute;left:940px;top:551px;" width="12" height="12" viewBox="0 0 12 12"><path d="M1 1L11 11M11 1L1 11" stroke="#d8d8d8" stroke-width="1.4"/></svg><div style="left:679px;top:568px;width:177px;height:21px;border:1px solid #333;border-radius:3px;box-sizing:border-box;background:linear-gradient(#4e4e4e,#434343);box-shadow:inset 0 1px 0 #5a5a5a"></div><span class="t" style="left:683px;top:573.00px;font-size:12px;color:#d8d8d8;">All</span><svg style="position:absolute;left:839px;top:577px;" width="9" height="4" viewBox="0 0 9 4"><path d="M0 0H9L4.5 4Z" fill="#aaa"/></svg><div style="left:858px;top:568px;width:50px;height:21px;border:1px solid #333;border-radius:3px;box-sizing:border-box;background:linear-gradient(#4e4e4e,#434343);box-shadow:inset 0 1px 0 #5a5a5a"></div><svg style="position:absolute;left:862px;top:570px;" width="12" height="17" viewBox="0 0 12 17"><path d="M1.5 1H10V15.5L5.75 12L1.5 15.5Z" fill="none" stroke="#d8d8d8" stroke-width="1.5"/></svg><span class="t" style="left:877.5px;top:574.00px;font-size:12px;color:#d8d8d8;">Tag</span><svg style="position:absolute;left:901px;top:584px;" width="6" height="3" viewBox="0 0 6 3"><path d="M0 0H6L3.0 3Z" fill="#999"/></svg><div style="left:911px;top:568px;width:21px;height:21px;border:1px solid #333;border-radius:3px;box-sizing:border-box;background:linear-gradient(#4e4e4e,#434343);box-shadow:inset 0 1px 0 #5a5a5a"></div><svg style="position:absolute;left:915px;top:573px;" width="13" height="11" viewBox="0 0 13 11"><rect x="0" y="0.5" width="13" height="1.8" fill="#d8d8d8"/><rect x="0" y="4.6" width="13" height="1.8" fill="#d8d8d8"/><rect x="0" y="8.7" width="13" height="1.8" fill="#d8d8d8"/></svg><svg style="position:absolute;left:936px;top:569px;" width="18" height="18" viewBox="0 0 18 18"><rect x="1.6" y="1.6" width="14.8" height="14.8" fill="none" stroke="#d8d8d8" stroke-width="1.2"/><path d="M9 1.5L10 2.5L8.5 3.5L10 4.5L8.5 5.5L10 6.5L8.8 7.5" fill="none" stroke="#d8d8d8" stroke-width="0.9"/></svg><div style="left:678px;top:591px;width:264px;height:54px;background:#363636"></div><div style="left:680px;top:592px;width:58px;height:52px;background:#d6d6d6"></div><div style="left:740px;top:592px;width:58px;height:52px;background:#d6d6d6"></div><div style="left:800px;top:592px;width:58px;height:52px;background:#d6d6d6"></div><div style="left:859px;top:592px;width:60px;height:52px;background:#56779a"></div><div style="left:863px;top:595px;width:53px;height:49px;background:radial-gradient(circle at 40% 45%,#a8d4ec,#78b0d4)"></div><svg style="position:absolute;left:680px;top:592px;" width="58" height="52" viewBox="0 0 58 52"><defs><radialGradient id="tg" cx="0.4" cy="0.4" r="0.8"><stop offset="0" stop-color="#dcdcdc"/><stop offset="1" stop-color="#cdcdcd"/></radialGradient></defs><rect width="58" height="52" fill="url(#tg)"/><g transform="translate(21.5 37) rotate(-48.5)"><path d="M0 -0.7L6 -1.2V1.2L0 0.7Z" fill="#1a1a1a"/><path d="M6 -1.6L12 -3.2V3.2L6 1.6Z" fill="#222228"/><path d="M12 -3.5L16 -5V5L12 3.5Z" fill="#55555f"/><rect x="16" y="-5" width="44" height="10" fill="#7a7a88"/><rect x="16" y="-5" width="44" height="1.2" fill="#3a3a48"/><rect x="16" y="3.8" width="44" height="1.2" fill="#3a3a48"/><rect x="16" y="-3" width="44" height="1.6" fill="#c4c4d2"/><rect x="20" y="0.5" width="40" height="2.2" fill="#2c2c3a"/><rect x="42" y="-5.3" width="20" height="10.6" fill="#181838"/><rect x="42" y="-2.8" width="20" height="1.4" fill="#7c7ca0"/></g><path d="M14 44C16 40 19 41 20 45C21 49 24 43 26 42C27 47 29 50 31 44C32 39 34 38 34 44C35 49 37 47 39 44C40 42 42 46 44 45C46 43 48 46 50 44C52 42 54 45 56 43C57 42 58 43 58 43" fill="none" stroke="#3a3a3a" stroke-width="1"/></svg><svg style="position:absolute;left:740px;top:592px;" width="58" height="52" viewBox="0 0 58 52"><rect width="58" height="52" fill="url(#tg)"/><g transform="translate(22 37) rotate(-48.5)"><path d="M0 -0.8L8 -1.5V1.5L0 0.8Z" fill="#6a6a6a"/><path d="M8 -1.8L14 -3V3L8 1.8Z" fill="#9a9a9a"/><path d="M14 -3.2L19 -4.5V4.5L14 3.2Z" fill="#b4b4b4"/><rect x="19" y="-4.8" width="7" height="9.6" fill="#d0d0d0"/><rect x="19" y="-2.5" width="7" height="1.4" fill="#f4f4f4"/><rect x="26" y="-5.6" width="20" height="11.2" fill="#333"/><rect x="27" y="-5.8" width="2.8" height="11.6" fill="#3a8ac8"/><rect x="38" y="-5.8" width="2.8" height="11.6" fill="#3a8ac8"/><rect x="46" y="-5.3" width="16" height="10.6" fill="#b8b8b8"/><rect x="46" y="-2.5" width="16" height="1.6" fill="#eee"/><rect x="46" y="2.5" width="16" height="1.4" fill="#777"/></g><path d="M17.5 39C15 44 17 49 26 49C38 49 50 46 58 43.5" fill="none" stroke="#000" stroke-width="2"/></svg><svg style="position:absolute;left:800px;top:592px;" width="58" height="52" viewBox="0 0 58 52"><rect width="58" height="52" fill="url(#tg)"/><g transform="translate(20.5 35.5) rotate(-48.5)"><path d="M0 0L19 -3.6V3.6Z" fill="#bdbdbd"/><path d="M0 0L19 -3.6V-1.2Z" fill="#f2f2f2"/><path d="M6 0.6L19 1.6V3.6Z" fill="#707070"/><path d="M9 -0.5L12 0" stroke="#333" stroke-width="0.8"/><rect x="19" y="-4.6" width="3" height="9.2" fill="#5a5a5a"/><rect x="22" y="-6" width="42" height="12" fill="#e4bc22"/><rect x="22" y="-4.4" width="42" height="2.6" fill="#f8de66"/><rect x="22" y="2.6" width="42" height="2.4" fill="#b48c10"/><rect x="35" y="-4" width="8" height="6.5" rx="1.5" fill="none" stroke="#4a3a10" stroke-width="1"/></g><path d="M20 40.5L13.5 46.5L24.5 44.8L35 41L28 50.5C40 48.5 50 43 58 37.5" fill="none" stroke="#111" stroke-width="1.1"/></svg><svg style="position:absolute;left:863px;top:595px;" width="52" height="49" viewBox="0 0 52 49"><defs><radialGradient id="tb" cx="0.35" cy="0.45" r="0.85"><stop offset="0" stop-color="#9ccfea"/><stop offset="1" stop-color="#76aacb"/></radialGradient></defs><rect width="52" height="49" fill="url(#tb)"/><g transform="translate(15.5 35.5) rotate(-47)"><path d="M0 0L11 -4.5L20 -5L20 5L11 4.5Z" fill="#a4c0d6" stroke="#1a2a48" stroke-width="0.7"/><path d="M0 0L20 -5V-1.5Z" fill="#dcecf6"/><ellipse cx="13" cy="0" rx="2" ry="1.2" fill="#1a2a48"/><path d="M2 0H12" stroke="#1a2a48" stroke-width="0.6"/><rect x="20" y="-5.5" width="4" height="11" fill="#7090ae"/><rect x="24" y="-6" width="30" height="12" fill="#0e1836"/><rect x="24" y="-4.2" width="30" height="1.8" fill="#3a4a70"/></g><path d="M12 38C10 41 10.5 46 14 44C21 40 27 37 31.5 36.5C34 43 38 46 44 43C47 42 50 41 52 40" fill="none" stroke="#1a2a48" stroke-width="1.6"/><g transform="translate(8 10.5) rotate(-40)"><path d="M-4 -2.4H5V2.4H-4L-6.8 0Z" fill="none" stroke="#1a2a48" stroke-width="1.4"/><rect x="2.4" y="-2.4" width="3.4" height="4.8" fill="#1a2a48"/></g></svg><div style="left:943px;top:591px;width:13px;height:54px;background:#3c3c3c"></div><div style="left:943px;top:591px;width:13px;height:13px;border:1px solid #575757;box-sizing:border-box;background:#424242"></div><svg style="position:absolute;left:945px;top:595px;" width="9" height="4" viewBox="0 0 9 4"><path d="M0 4H9L4.5 0Z" fill="#9a9a9a"/></svg><div style="left:943px;top:605px;width:13px;height:26px;border:1px solid #575757;box-sizing:border-box;background:#454545"></div><div style="left:943px;top:631px;width:13px;height:13px;border:1px solid #575757;box-sizing:border-box;background:#424242"></div><svg style="position:absolute;left:945px;top:636px;" width="9" height="4" viewBox="0 0 9 4"><path d="M0 0H9L4.5 4Z" fill="#9a9a9a"/></svg><div style="left:678px;top:645px;width:188px;height:22px;border-radius:3px;background:#3a3a3a"></div><span class="t" style="left:680.5px;top:650.00px;font-size:11.6px;color:#777;">Search</span><div style="left:872px;top:648px;width:14px;height:14px;border-radius:2px;background:#3a3a3a"></div><svg style="position:absolute;left:873px;top:650px;" width="12" height="11" viewBox="0 0 12 11"><path d="M1.5 5.5L4.5 9.5L10.5 1" fill="none" stroke="#d8d8d8" stroke-width="1.4"/></svg><span class="t" style="left:891.5px;top:651.00px;font-size:11.3px;color:#d8d8d8;">Filter in Tag</span><div style="left:674px;top:370px;width:2px;height:2px;background:#8a8a8a"></div><div style="left:674px;top:373px;width:2px;height:2px;background:#8a8a8a"></div><div style="left:674px;top:376px;width:2px;height:2px;background:#8a8a8a"></div><div style="left:674px;top:379px;width:2px;height:2px;background:#8a8a8a"></div><div style="left:674px;top:382px;width:2px;height:2px;background:#8a8a8a"></div><div style="left:674px;top:385px;width:2px;height:2px;background:#8a8a8a"></div><div style="left:6px;top:155px;width:40px;height:1px;background:#555"></div><div style="left:6px;top:291px;width:40px;height:1px;background:#555"></div><div style="left:6px;top:349px;width:40px;height:1px;background:#555"></div><div style="left:6px;top:433px;width:40px;height:1px;background:#555"></div><div style="left:6px;top:491px;width:40px;height:1px;background:#555"></div><div style="left:6px;top:601px;width:40px;height:1px;background:#555"></div><svg style="position:absolute;left:5px;top:105px;" width="16" height="16" viewBox="0 0 16 16"><path d="M3 0L3 14L6 11.2L8.6 16L10.4 15L8.2 10.5L12.3 10.1Z" fill="#d6d6d6"/></svg><svg style="position:absolute;left:31px;top:105px;" width="16" height="16" viewBox="0 0 16 16"><path d="M1 0.3H15V2.3H1Z M1 0.3H2.7V5H1Z M13.3 0.3H15V5H13.3Z M7 2H9V14H7Z M4.2 13.9H11.8V16H4.2Z" fill="#d6d6d6"/></svg><svg style="position:absolute;left:5px;top:131px;" width="16" height="16" viewBox="0 0 16 16"><path d="M2 13.5C2 10 2.5 6 4 4.5C7 2.5 10 2 14 2" fill="none" stroke="#d6d6d6" stroke-width="1.2"/><rect x="0.6" y="11.6" width="3.3" height="3.3" fill="#4a4a4a" stroke="#d6d6d6" stroke-width="1.2"/><rect x="2.6" y="3" width="3.3" height="3.3" fill="#4a4a4a" stroke="#d6d6d6" stroke-width="1.2"/><rect x="12.6" y="0.6" width="3.3" height="3.3" fill="#4a4a4a" stroke="#d6d6d6" stroke-width="1.2"/><path d="M8 6.5L14.5 12L10.5 12L8 16Z" fill="#d6d6d6"/></svg><svg style="position:absolute;left:31px;top:131px;" width="16" height="16" viewBox="0 0 16 16"><path d="M0 14.5L3.5 6.5L9.5 3L13 6.5L9.5 12.5Z" fill="#d6d6d6"/><path d="M0.5 14L6 8.5" stroke="#4a4a4a" stroke-width="1.1"/><circle cx="6.8" cy="7.8" r="1.3" fill="#4a4a4a"/><path d="M10.5 1.2L14.8 5.5" stroke="#d6d6d6" stroke-width="1.6"/></svg><div style="left:1px;top:159px;width:24px;height:24px;background:#5d7690;border-radius:3px;box-shadow:inset 0 0 0 1px #7a94ac,0 0 0 1px #383838"></div><svg style="position:absolute;left:5px;top:163px;" width="16" height="16" viewBox="0 0 16 16"><path d="M9.3 4.6L12.2 0.6L16.2 0.4L16.1 3.2L12.4 6.9Z" fill="#d6d6d6"/><path d="M7.2 6.4L10 9.1M8.4 5.2L11.2 7.9" stroke="#d6d6d6" stroke-width="1.1"/><path d="M0.4 14.9C2 14.2 2.8 12.4 3.3 10.8C4.2 8.6 6.8 7.8 8.8 8.9C10.6 10 10.2 12.6 8.6 14C6.6 15.8 3 16 0.4 14.9Z" fill="#d6d6d6"/></svg><svg style="position:absolute;left:31px;top:163px;" width="16" height="16" viewBox="0 0 16 16"><path d="M1.5 14.5L14.5 1.5" stroke="#d6d6d6" stroke-width="1.9"/></svg><svg style="position:absolute;left:5px;top:189px;" width="16" height="16" viewBox="0 0 16 16"><rect x="1" y="1" width="14" height="14" fill="none" stroke="#d6d6d6" stroke-width="1.9"/></svg><svg style="position:absolute;left:31px;top:189px;" width="16" height="16" viewBox="0 0 16 16"><circle cx="8" cy="8" r="7" fill="none" stroke="#d6d6d6" stroke-width="1.9"/></svg><svg style="position:absolute;left:5px;top:215px;" width="16" height="16" viewBox="0 0 16 16"><path d="M6 1H15V10L10.5 15H1V6Z" fill="none" stroke="#d6d6d6" stroke-width="1.9"/></svg><svg style="position:absolute;left:31px;top:215px;" width="16" height="16" viewBox="0 0 16 16"><path d="M0.5 1L15 8L1 15L7.5 0.5" fill="none" stroke="#d6d6d6" stroke-width="1.9" stroke-linejoin="round"/></svg><svg style="position:absolute;left:5px;top:241px;" width="16" height="16" viewBox="0 0 16 16"><path d="M1.2 16V12.5C1.2 7 4 2.5 8 2.5C12 2.5 14.8 7 14.8 12.5V16" fill="none" stroke="#d6d6d6" stroke-width="1.8"/><path d="M2 1.7H14" stroke="#d6d6d6" stroke-width="1.2"/><circle cx="2" cy="1.7" r="1.7" fill="#d6d6d6"/><circle cx="14" cy="1.7" r="1.7" fill="#d6d6d6"/><rect x="6.2" y="0" width="3.6" height="3.6" fill="#d6d6d6"/><rect x="7.2" y="1" width="1.6" height="1.6" fill="#4a4a4a"/></svg><svg style="position:absolute;left:31px;top:241px;" width="16" height="16" viewBox="0 0 16 16"><path d="M2 5.5C3 3 6 1.5 10 1.8C13 2 11 6 11 8C10.5 10 11 12 11.5 13.5" fill="none" stroke="#d6d6d6" stroke-width="1.7"/><rect x="0.3" y="3.8" width="3.6" height="3.6" fill="#4a4a4a" stroke="#d6d6d6" stroke-width="1.2"/><rect x="12" y="0.2" width="3.6" height="3.6" fill="#4a4a4a" stroke="#d6d6d6" stroke-width="1.2"/><rect x="9.3" y="11.8" width="3.6" height="3.6" fill="#4a4a4a" stroke="#d6d6d6" stroke-width="1.2"/></svg><svg style="position:absolute;left:5px;top:267px;" width="16" height="16" viewBox="0 0 16 16"><path d="M2.5 1.5C6 0.5 11 0.5 13.5 2.5C16 5.5 12 11 1 15" fill="none" stroke="#d6d6d6" stroke-width="1.8"/><circle cx="8.3" cy="5.5" r="1.3" fill="#d6d6d6"/></svg><svg style="position:absolute;left:31px;top:267px;" width="16" height="16" viewBox="0 0 16 16"><path d="M16 0L9.5 1.5L14.5 6.5Z" fill="#d6d6d6"/><path d="M12 3.8L5.5 6.5M12.3 4.2L7.5 10.5M12.5 4.5L11.2 11" stroke="#d6d6d6" stroke-width="1.1"/><path d="M5.8 5.5C4 4.5 1.5 5 0.5 7C2.5 7.8 4.5 8 6 6.8Z" fill="#d6d6d6"/><path d="M7.8 10C6 9.5 4.2 11 4.2 13C6.2 13.4 8 12.5 8.5 11Z" fill="#d6d6d6"/><path d="M11.5 10.8C10 10.5 8.8 12.5 9.5 14.8C11.3 14.8 12.5 13.3 12.2 11.5Z" fill="#d6d6d6"/></svg><svg style="position:absolute;left:5px;top:299px;" width="16" height="16" viewBox="0 0 16 16"><rect x="1.5" y="1.5" width="13" height="13" fill="none" stroke="#d6d6d6" stroke-width="1.8"/><circle cx="1.5" cy="1.5" r="1.5" fill="#d6d6d6"/><circle cx="1.5" cy="8" r="1.5" fill="#d6d6d6"/><circle cx="1.5" cy="14.5" r="1.5" fill="#d6d6d6"/><circle cx="8" cy="1.5" r="1.5" fill="#d6d6d6"/><circle cx="8" cy="14.5" r="1.5" fill="#d6d6d6"/><circle cx="14.5" cy="1.5" r="1.5" fill="#d6d6d6"/><circle cx="14.5" cy="8" r="1.5" fill="#d6d6d6"/><circle cx="14.5" cy="14.5" r="1.5" fill="#d6d6d6"/><rect x="7" y="7" width="2" height="2" fill="#d6d6d6"/></svg><svg style="position:absolute;left:31px;top:299px;" width="16" height="16" viewBox="0 0 16 16"><path d="M8 1V15M1 8H15" stroke="#d6d6d6" stroke-width="1.9"/><path d="M8 0L11 3.5H5Z M8 16L11 12.5H5Z M0 8L3.5 5V11Z M16 8L12.5 5V11Z" fill="#d6d6d6"/></svg><svg style="position:absolute;left:5px;top:325px;" width="16" height="16" viewBox="0 0 16 16"><path d="M4 0V13H16M0 3H13V16" fill="none" stroke="#d6d6d6" stroke-width="1.9"/></svg><div style="left:5px;top:357px;width:16px;height:16px;box-sizing:border-box;border:1px solid #d6d6d6;padding:2px"><div style="width:100%;height:100%;background:linear-gradient(90deg,#2a2a2a,#e0e0e0)"></div></div><svg style="position:absolute;left:31px;top:357px;" width="16" height="16" viewBox="0 0 16 16"><path d="M9.5 3L13 6.5L5 14.5L1.5 15L1 14.5L1.5 11Z" fill="none" stroke="#d6d6d6" stroke-width="1.2"/><path d="M9 2.5C10 1.5 11 3 12 2C13 0 15.5 0 16 2.5C16 4 14.5 4.5 13.5 5.5C13 6.5 14 7 13.5 7.5Z" fill="#d6d6d6"/><path d="M8.5 2.5L13.5 7.5" stroke="#d6d6d6" stroke-width="1.5"/></svg><svg style="position:absolute;left:5px;top:383px;" width="16" height="16" viewBox="0 0 16 16"><path d="M7.9 0.6V2.6M7.9 13.3V15.3M0.6 7.9H2.6M13.3 7.9H15.3" stroke="#d6d6d6" stroke-width="1.9"/><path d="M2.4 2.4L4 4M2.4 13.2L4 11.6M13.4 13.2L11.8 11.6" stroke="#d6d6d6" stroke-width="1.7"/><path d="M4.8 10.6C5.5 8 7 6 9 5.8C10.8 5.8 11.6 7.8 10.6 9.4C9.5 11 7 11 4.8 10.6Z" fill="#d6d6d6"/><path d="M9.6 5.2L10.8 4M11.2 6.2L12.3 5" stroke="#d6d6d6" stroke-width="1"/><path d="M11.5 3.6L13.5 1.2C14.3 0.4 16 0.6 15.8 1.8C15.4 3 14 4.4 12.8 4.8Z" fill="#d6d6d6"/></svg><svg style="position:absolute;left:31px;top:383px;" width="16" height="16" viewBox="0 0 16 16"><path d="M2.6 13.4L13.4 2.6" stroke="#d6d6d6" stroke-width="3.8"/><path d="M4.2 1.2L7.2 4.2L4.2 7.2L1.2 4.2Z M11.8 8.8L14.8 11.8L11.8 14.8L8.8 11.8Z" fill="#d6d6d6"/></svg><svg style="position:absolute;left:5px;top:409px;" width="16" height="16" viewBox="0 0 16 16"><path d="M1 7L7.5 1.5L14 8L8 14Z" fill="none" stroke="#d6d6d6" stroke-width="1.5"/><path d="M1.5 8L14 8L8 14Z" fill="#d6d6d6"/><path d="M4.5 0.5L7.5 7" stroke="#d6d6d6" stroke-width="1.3"/><path d="M14.5 10C15.5 11.5 16 13 14.8 13.5C13.6 13 14 11.5 14.5 10Z" fill="#d6d6d6"/></svg><svg style="position:absolute;left:5px;top:441px;" width="16" height="16" viewBox="0 0 16 16"><path d="M1.5 1.5L14.5 14.5M14.5 1.5L1.5 14.5" stroke="#d6d6d6" stroke-width="1.2"/><path d="M1.5 1.5L4 4M14.5 1.5L12 4M1.5 14.5L4 12M14.5 14.5L12 12" stroke="#d6d6d6" stroke-width="2.2" stroke-linecap="round"/><circle cx="8" cy="8" r="5.5" fill="none" stroke="#d6d6d6" stroke-width="1.1"/></svg><svg style="position:absolute;left:31px;top:441px;" width="16" height="16" viewBox="0 0 16 16"><path d="M1 14.5H14.5M1 14.5L14.5 1" stroke="#d6d6d6" stroke-width="1.9"/><path d="M9.5 6.5C11 8.5 12 11 12 14" fill="none" stroke="#d6d6d6" stroke-width="1.6"/></svg><svg style="position:absolute;left:5px;top:467px;" width="16" height="16" viewBox="0 0 16 16"><path d="M10 0L15.7 5.5L11 8L10 13L6.5 9.5L0.5 15.5L6 9L2.5 5.5L8 4.5Z" fill="#d6d6d6"/><path d="M0.5 15.5L6.5 9.5" stroke="#d6d6d6" stroke-width="0.9"/></svg><svg style="position:absolute;left:5px;top:499px;" width="16" height="16" viewBox="0 0 16 16"><rect x="1" y="1" width="14" height="14" fill="none" stroke="#d6d6d6" stroke-width="1.9" stroke-dasharray="3 2.2" stroke-dashoffset="1.5"/></svg><svg style="position:absolute;left:31px;top:499px;" width="16" height="16" viewBox="0 0 16 16"><circle cx="8" cy="8" r="7" fill="none" stroke="#d6d6d6" stroke-width="1.9" stroke-dasharray="3 2.2"/></svg><svg style="position:absolute;left:5px;top:525px;" width="16" height="16" viewBox="0 0 16 16"><path d="M5.5 1H15V10.5L10.5 15H1V5.5Z" fill="none" stroke="#d6d6d6" stroke-width="1.9" stroke-dasharray="3 2.2"/></svg><svg style="position:absolute;left:31px;top:525px;" width="16" height="16" viewBox="0 0 16 16"><path d="M1.8 6.5C2.5 2.5 6 0.8 9.5 1.2C13.5 1.8 15.5 5.5 14.8 9.5C14.3 12.5 12.5 14.5 10.5 14.8" fill="none" stroke="#d6d6d6" stroke-width="1.9" stroke-dasharray="3 2.2"/><path d="M4.5 9C5.5 6.5 8.5 6 10 7.8C11.2 9.3 11 11.5 9.5 12.8" fill="none" stroke="#d6d6d6" stroke-width="1.9" stroke-dasharray="2.6 2"/></svg><svg style="position:absolute;left:5px;top:551px;" width="16" height="16" viewBox="0 0 16 16"><path d="M6 0.5V11.5M0.5 6H11.5M2 2L10 10M10 2L2 10" stroke="#d6d6d6" stroke-width="1.6"/><circle cx="6" cy="6" r="3" fill="#d6d6d6"/><path d="M8 8L15 15" stroke="#d6d6d6" stroke-width="1.9"/></svg><svg style="position:absolute;left:31px;top:551px;" width="16" height="16" viewBox="0 0 16 16"><path d="M5 1H1V15H15V11" fill="none" stroke="#d6d6d6" stroke-width="1.9" stroke-dasharray="3 2"/><path d="M9 5L11.5 7.5L5.5 13.5L3.5 13.5L3.5 11Z" fill="none" stroke="#d6d6d6" stroke-width="1.2"/><path d="M9 4C10.5 2.5 11 3 12 2C13 0.5 15.5 0.8 15.5 3C15.5 4.5 13.5 5.5 12.5 6.5Z" fill="#d6d6d6"/></svg><svg style="position:absolute;left:5px;top:577px;" width="16" height="16" viewBox="0 0 16 16"><path d="M2 4V11C2 13 5 15 8 15C11 15 14 13 14 11V4" fill="none" stroke="#d6d6d6" stroke-width="1.9" stroke-dasharray="3 2.2"/><path d="M1.8 1.8H14" stroke="#d6d6d6" stroke-width="1.4"/><circle cx="1.8" cy="1.8" r="1.7" fill="#d6d6d6"/><circle cx="14.2" cy="1.8" r="1.7" fill="#d6d6d6"/><rect x="6.2" y="0" width="3.6" height="3.6" fill="#d6d6d6"/><rect x="7.2" y="1" width="1.6" height="1.6" fill="#4a4a4a"/></svg><svg style="position:absolute;left:31px;top:577px;" width="16" height="16" viewBox="0 0 16 16"><path d="M4.5 1H1V15H15V11.5" fill="none" stroke="#d6d6d6" stroke-width="1.9" stroke-dasharray="3 2"/><path d="M4.5 4C6 1 9 0.5 11.5 1.5C15 3 14.5 7.5 10.5 10" fill="none" stroke="#d6d6d6" stroke-width="1.9"/><circle cx="4.8" cy="5" r="1.1" fill="#4a4a4a"/><circle cx="10.5" cy="10.5" r="1.1" fill="#4a4a4a"/></svg><svg style="position:absolute;left:5px;top:609px;" width="16" height="16" viewBox="0 0 16 16"><circle cx="6" cy="6" r="4.8" fill="none" stroke="#d6d6d6" stroke-width="1.9"/><path d="M9.5 9.5L15 15" stroke="#d6d6d6" stroke-width="2.5"/></svg><svg style="position:absolute;left:31px;top:609px;" width="16" height="16" viewBox="0 0 16 16"><rect x="3.6" y="2.2" width="2.3" height="9" rx="1.1" fill="#d6d6d6"/><rect x="6.6" y="0.3" width="2.3" height="10" rx="1.1" fill="#d6d6d6"/><rect x="9.6" y="0.8" width="2.3" height="10" rx="1.1" fill="#d6d6d6"/><rect x="12.5" y="2.8" width="2.3" height="9" rx="1.1" fill="#d6d6d6"/><path d="M3.6 8H14.8V12.5C14.8 14.5 13.5 16 11.5 16H6.5C4.5 16 3 14 2 12L0.5 9.5C0.3 8.8 1.2 8.2 1.8 8.6L3.6 10Z" fill="#d6d6d6"/></svg><div style="left:0px;top:668px;width:957px;height:30px;background:#4a4a4a"></div><div style="left:0px;top:698px;width:957px;height:1px;background:#2a2a2a"></div><div style="left:0px;top:698px;width:137px;height:1px;background:#b06a2a"></div><div style="left:7px;top:675px;width:15px;height:15px;box-sizing:border-box;border:1px solid #cfcfcf"></div><svg style="position:absolute;left:9px;top:677px;" width="11" height="11" viewBox="0 0 11 11"><circle cx="5.5" cy="5.5" r="3.6" fill="none" stroke="#cfcfcf" stroke-width="1" stroke-dasharray="1 1.2"/></svg><span class="t" style="left:37px;top:679.00px;font-size:11.5px;color:#d0d0d0;">d) ...ugh</span><span class="t" style="left:101.3px;top:678.00px;font-size:12.1px;color:#d0d0d0;">CMYK/...proof</span><div style="left:477px;top:673px;width:130px;height:22px;box-sizing:border-box;border:1px solid #3a3a3a;background:#474747"></div><span class="t" style="left:481.5px;top:679.00px;font-size:11.2px;color:#d0d0d0;">3,000 <u style="text-underline-offset:1px">x</u> 3,000 (43.1 MiB)</span><svg style="position:absolute;left:613px;top:672px;" width="23" height="23" viewBox="0 0 23 23"><circle cx="11.5" cy="11.5" r="10.5" fill="#2c2c2c"/><path d="M11.5 2V21M2 11.5H21" stroke="#555" stroke-width="0.8" stroke-dasharray="1 1.5"/><path d="M11.5 11.5H20.5" stroke="#e0e0e0" stroke-width="1.2"/><circle cx="11.5" cy="11.5" r="1" fill="#e0e0e0"/><circle cx="20.5" cy="11.5" r="1" fill="#e0e0e0"/></svg><span class="t" style="left:665.8px;top:679.00px;font-size:11.0px;color:#d0d0d0;">0.00&deg;</span><span class="t" style="left:785.5px;top:678.00px;font-size:11.6px;color:#d0d0d0;">8.8%</span><div style="left:828px;top:681px;width:81px;height:5px;border-radius:2px;background:#333"></div><div style="left:828px;top:682px;width:2px;height:3px;background:#52708f"></div><div style="left:830px;top:677px;width:12px;height:12px;border-radius:3px;box-sizing:border-box;border:1px solid #2c2c2c;background:#4e4e4e"></div><div style="left:910px;top:672px;width:23px;height:23px;border-radius:3px;box-sizing:border-box;border:1px solid #333;background:#474747"></div><div style="left:916px;top:675px;width:12px;height:16px;box-sizing:border-box;border:1px solid #d8d8d8"></div><div style="left:919px;top:680px;width:6px;height:6px;background:#d8d8d8"></div><div style="left:921px;top:682px;width:2px;height:2px;background:#474747"></div><div style="left:945px;top:694px;width:2px;height:2px;background:#6a6a6a"></div><div style="left:948px;top:691px;width:2px;height:2px;background:#6a6a6a"></div><div style="left:948px;top:694px;width:2px;height:2px;background:#6a6a6a"></div><div style="left:951px;top:688px;width:2px;height:2px;background:#6a6a6a"></div><div style="left:951px;top:691px;width:2px;height:2px;background:#6a6a6a"></div><div style="left:951px;top:694px;width:2px;height:2px;background:#6a6a6a"></div><div style="left:954px;top:685px;width:2px;height:2px;background:#6a6a6a"></div><div style="left:954px;top:688px;width:2px;height:2px;background:#6a6a6a"></div><div style="left:954px;top:691px;width:2px;height:2px;background:#6a6a6a"></div><div style="left:954px;top:694px;width:2px;height:2px;background:#6a6a6a"></div>
</body></html>
